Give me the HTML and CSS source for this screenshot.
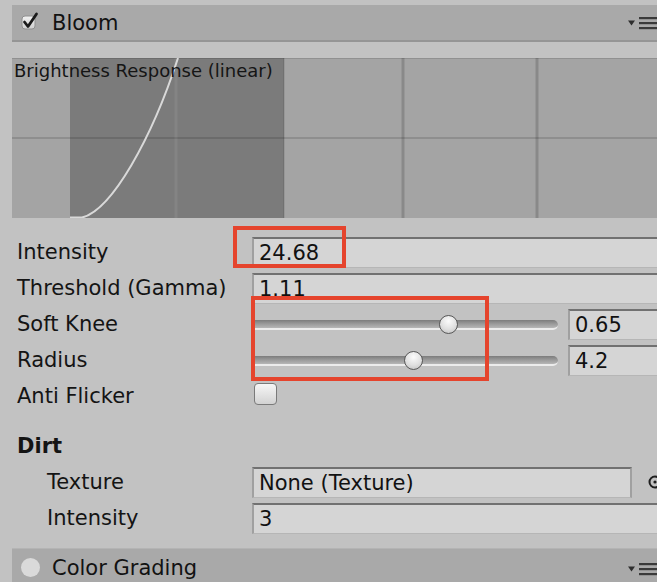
FILE: index.html
```html
<!DOCTYPE html>
<html>
<head>
<meta charset="utf-8">
<link rel="stylesheet" href="styles.css">
</head>
<body>
<div class="inspector">
  <div class="header">
    <svg class="toggle" width="18" height="19" viewBox="0 0 18 19">
      <defs>
        <linearGradient id="cb" x1="0" y1="0" x2="0" y2="1">
          <stop offset="0" stop-color="#f2f2f2"/>
          <stop offset="1" stop-color="#cfcfcf"/>
        </linearGradient>
      </defs>
      <rect x="1" y="4" width="13" height="13" rx="3" fill="url(#cb)" stroke="#8f8f8f" stroke-width="1"/>
      <path d="M3.5 10 L7 14.5 L15.5 2" fill="none" stroke="#1a1a1a" stroke-width="2.8" stroke-linecap="round" stroke-linejoin="round"/>
    </svg>
    <span class="title">Bloom</span>
    <svg class="menu" width="30" height="14" viewBox="0 0 30 14">
      <path d="M1 3.5 L8 3.5 L4.5 8.5 Z" fill="#2e2e2e"/>
      <rect x="12" y="0" width="18" height="2.2" fill="#3a3a3a"/>
      <rect x="12" y="5" width="18" height="2.2" fill="#3a3a3a"/>
      <rect x="12" y="10" width="18" height="2.2" fill="#3a3a3a"/>
    </svg>
  </div>

  <div class="graph">
    <svg width="645" height="160" viewBox="0 0 645 160">
      <rect x="0" y="0" width="645" height="160" fill="#a4a4a4"/>
      <rect x="58" y="0" width="214" height="160" fill="#7b7b7b"/>
      <line x1="0" y1="80" x2="645" y2="80" stroke="rgba(0,0,0,0.13)" stroke-width="2"/>
      <line x1="164" y1="0" x2="164" y2="160" stroke="rgba(255,255,255,0.07)" stroke-width="3"/>
      <line x1="272" y1="0" x2="272" y2="160" stroke="rgba(0,0,0,0.08)" stroke-width="2"/>
      <line x1="391" y1="0" x2="391" y2="160" stroke="rgba(0,0,0,0.16)" stroke-width="3"/>
      <line x1="525" y1="0" x2="525" y2="160" stroke="rgba(0,0,0,0.16)" stroke-width="3"/>
      <line x1="0" y1="0.5" x2="645" y2="0.5" stroke="rgba(0,0,0,0.12)" stroke-width="1"/>
      <path d="M58 159.5 L70 159.5 C 100 152, 140 80, 166 0" fill="none" stroke="#d9d9d9" stroke-width="2"/>
    </svg>
    <div class="graph-label">Brightness Response (linear)</div>
  </div>

  <div class="rows">
    <div class="row">
      <div class="label">Intensity</div>
      <div class="field">24.68</div>
    </div>
    <div class="row">
      <div class="label">Threshold (Gamma)</div>
      <div class="field">1.11</div>
    </div>
    <div class="row">
      <div class="label">Soft Knee</div>
      <div class="slider">
        <div class="track"></div>
        <div class="thumb" style="left: 187px;"></div>
      </div>
      <div class="field num">0.65</div>
    </div>
    <div class="row">
      <div class="label">Radius</div>
      <div class="slider">
        <div class="track"></div>
        <div class="thumb" style="left: 152px;"></div>
      </div>
      <div class="field num">4.2</div>
    </div>
    <div class="row">
      <div class="label">Anti Flicker</div>
      <div class="checkbox"></div>
    </div>

    <div class="row section">
      <div class="label bold">Dirt</div>
    </div>
    <div class="row">
      <div class="label sub">Texture</div>
      <div class="field closed">None (Texture)</div>
      <svg class="picker" width="14" height="16" viewBox="0 0 14 16">
        <circle cx="12" cy="8" r="5.5" fill="none" stroke="#1e1e1e" stroke-width="2"/>
        <circle cx="12" cy="8" r="1.6" fill="#1e1e1e"/>
      </svg>
    </div>
    <div class="row">
      <div class="label sub">Intensity</div>
      <div class="field">3</div>
    </div>
  </div>

  <div class="header second">
    <span class="dot"></span>
    <span class="title">Color Grading</span>
    <svg class="menu" width="30" height="14" viewBox="0 0 30 14">
      <path d="M1 3.5 L8 3.5 L4.5 8.5 Z" fill="#2e2e2e"/>
      <rect x="12" y="0" width="18" height="2.2" fill="#3a3a3a"/>
      <rect x="12" y="5" width="18" height="2.2" fill="#3a3a3a"/>
      <rect x="12" y="10" width="18" height="2.2" fill="#3a3a3a"/>
    </svg>
  </div>

  <div class="mark mark-one"></div>
  <div class="mark mark-two"></div>
</div>
</body>
</html>
```

FILE: styles.css
```css
html, body {
  margin: 0;
  padding: 0;
  background: #c2c2c2;
  overflow: hidden;
}

body {
  font-family: "DejaVu Sans", "Liberation Sans", sans-serif;
  color: #141414;
}

.inspector {
  position: relative;
  width: 657px;
  height: 582px;
  padding-top: 5px;
  box-sizing: border-box;
}

.header {
  margin-left: 12px;
  height: 35px;
  background: #a9a9a9;
  border-bottom: 2px solid #959595;
  display: flex;
  align-items: center;
  padding-left: 9px;
}

.toggle {
  flex: none;
  margin-top: -2px;
}

.title {
  font-size: 21px;
  margin-left: 13px;
  color: #121212;
}

.menu {
  flex: none;
  margin-left: auto;
  margin-top: 2px;
}

.second {
  margin-top: 12px;
  height: 38px;
  border-bottom: none;
  border-top: 1px solid #b4b4b4;
  padding-left: 9px;
  align-items: flex-start;
  padding-top: 9px;
  box-sizing: border-box;
}

.second .title {
  margin-left: 12px;
  margin-top: -2px;
}

.second .menu {
  margin-top: 5px;
}

.dot {
  flex: none;
  width: 19px;
  height: 19px;
  border-radius: 50%;
  background: #dadada;
}

.graph {
  position: relative;
  margin: 16px 0 0 12px;
  height: 160px;
  width: 645px;
}

.graph svg {
  display: block;
}

.graph-label {
  position: absolute;
  left: 2px;
  top: 2px;
  font-size: 18px;
  color: #151515;
}

.rows {
  margin-top: 16px;
  display: flex;
  flex-direction: column;
}

.row {
  display: flex;
  align-items: center;
  height: 36px;
}

.label {
  flex: none;
  width: 235px;
  padding-left: 17px;
  font-size: 21px;
}

.label.sub {
  padding-left: 47px;
  width: 205px;
}

.label.bold {
  font-weight: bold;
}

.section {
  margin-top: 14px;
}

.field {
  flex: 1;
  height: 31px;
  box-sizing: border-box;
  background: #d5d5d5;
  border-top: 2px solid #717171;
  border-left: 2px solid #a0a0a0;
  border-bottom: 1px solid #b6b6b6;
  padding-left: 5px;
  font-size: 21px;
  display: flex;
  align-items: center;
  color: #111;
}

.field.closed {
  flex: none;
  width: 380px;
  border-right: 2px solid #a0a0a0;
}

.field.num {
  margin-left: 10px;
}

.picker {
  flex: none;
  margin-left: 11px;
}

.slider {
  flex: none;
  position: relative;
  width: 306px;
  height: 36px;
}

.track {
  position: absolute;
  left: 0;
  right: 0;
  top: 14px;
  height: 8px;
  background: linear-gradient(#7c7c7c, #9b9b9b 50%, #b6b6b6);
  border-bottom: 2px solid #ececec;
  border-radius: 0 6px 6px 0;
}

.thumb {
  position: absolute;
  top: 9px;
  width: 17px;
  height: 17px;
  border-radius: 50%;
  border: 1.5px solid #575757;
  background: radial-gradient(circle at 50% 30%, #fbfbfb, #e0e0e0 55%, #bdbdbd);
}

.checkbox {
  flex: none;
  margin-left: 2px;
  margin-top: -4px;
  width: 21px;
  height: 20px;
  border: 1px solid #7a7a7a;
  border-radius: 4px;
  background: linear-gradient(#f6f6f6, #d2d2d2);
}

.mark {
  position: absolute;
  border: 4px solid #e5442d;
  box-sizing: border-box;
}

.mark-one {
  left: 233px;
  top: 226px;
  width: 113px;
  height: 42px;
}

.mark-two {
  left: 251px;
  top: 296px;
  width: 238px;
  height: 85px;
}
```
